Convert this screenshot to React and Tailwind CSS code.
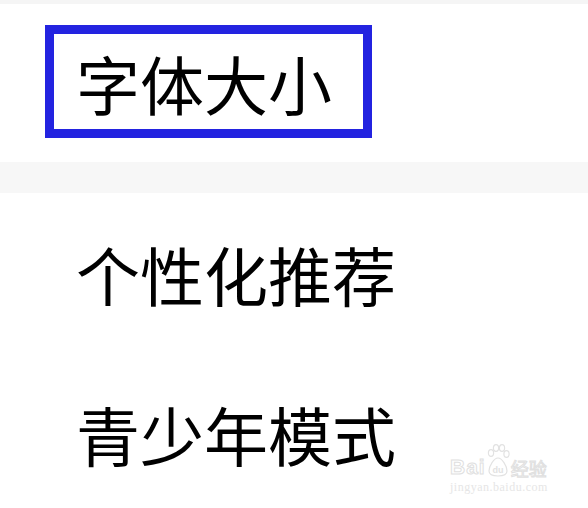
import React from 'react';

const rows = ['个性化推荐', '青少年模式'];

const font = { fontFamily: '"Noto Sans CJK SC", "Noto Sans", sans-serif' };

// faint Baidu paw mark of the watermark
const Paw = () => (
  <svg width="24" height="34" viewBox="0 0 24 34" fill="none" stroke="#e2e2e2" strokeWidth="1.2">
    <ellipse cx="5" cy="9" rx="2.6" ry="3.4" />
    <ellipse cx="10" cy="4" rx="2.6" ry="3.4" />
    <ellipse cx="16" cy="4" rx="2.6" ry="3.4" />
    <ellipse cx="20.5" cy="10" rx="2.6" ry="3.4" />
    <path d="M12 14c-4 0-9 8-9 13c0 4 3 5 9 5s9-1 9-5c0-5-5-13-9-13z" />
    <text x="12" y="29" textAnchor="middle" fontSize="9" fontWeight="700" fill="#e2e2e2" stroke="none" fontFamily="Liberation Sans, sans-serif">du</text>
  </svg>
);

export default function App() {
  return (
    <div className="relative w-full h-[508px] bg-white overflow-hidden text-black" style={font}>
      {/* top strip */}
      <div className="h-[4px] bg-[#f5f5f5]" />

      {/* highlighted item */}
      <div className="pt-[21px] pb-[24px] pl-[45px]">
        <div className="flex items-center w-[327px] h-[113px] border-[9px] border-[#2323e0] pl-[22px]">
          <span className="text-[64px] leading-none">字体大小</span>
        </div>
      </div>

      {/* divider band */}
      <div className="h-[31px] bg-[#f7f7f7]" />

      {rows.map((r) => (
        <div key={r} className="flex items-center h-[160px] pl-[76px]">
          <span className="text-[64px] leading-none">{r}</span>
        </div>
      ))}

      {/* watermark */}
      <div className="absolute left-[450px] top-[444px] flex flex-col select-none">
        <div className="flex items-end leading-none">
          <span className="text-[21px] tracking-[1px] font-bold text-white [-webkit-text-stroke:1px_#e0e0e0] mb-[1px]" style={{ fontFamily: '"Liberation Sans", sans-serif' }}>Bai</span>
          <Paw />
          <span className="text-[18px] text-white [-webkit-text-stroke:1px_#e0e0e0] mb-[1px] ml-[1px]">经验</span>
        </div>
        <span className="text-[12px] tracking-[0.5px] leading-none mt-[3px] text-[#e6e6e6]" style={{ fontFamily: '"Liberation Serif", serif' }}>jingyan.baidu.com</span>
      </div>
    </div>
  );
}
